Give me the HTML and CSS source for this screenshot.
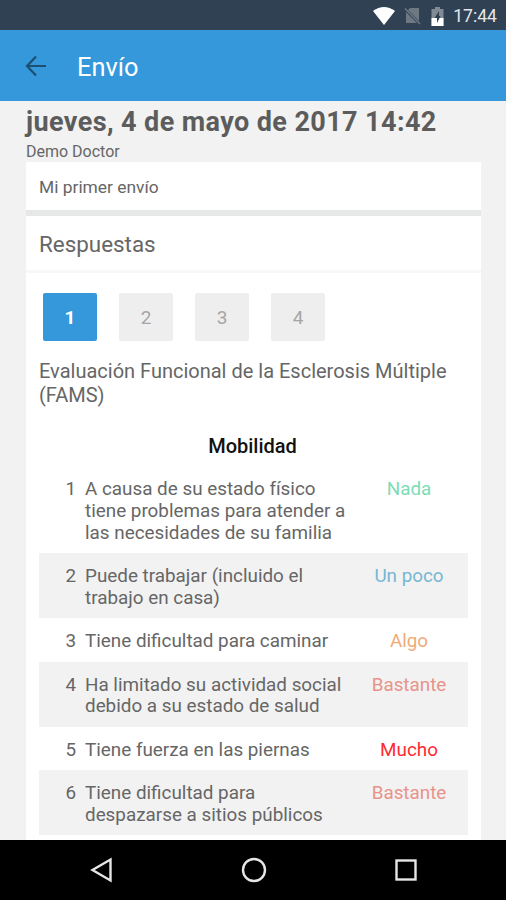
FILE: index.html
```html
<!DOCTYPE html>
<html lang="es">
<head>
    <meta charset="UTF-8">
    <meta name="viewport" content="width=device-width, initial-scale=1.0">
    <title>Envío</title>
    <link rel="stylesheet" href="styles.css">
</head>
<body>
    <!-- Status bar -->
    <div class="status-bar">
        <svg class="wifi" width="24" height="20" viewBox="0 0 24 20">
            <path d="M1 5Q12 -3 23 5L12 19Z" fill="#fff"/>
        </svg>
        <svg class="no-sim" width="18" height="18" viewBox="0 0 18 18">
            <path d="M6 1H15V14L4 3ZM2 5L13 16H2Z" fill="#6d7883"/>
            <path d="M1 1.5L16 17" stroke="#6d7883" stroke-width="1.5"/>
        </svg>
        <svg class="battery" width="13" height="19" viewBox="0 0 13 19">
            <path d="M4 0H9V2H12.5V19H.5V2H4Z" fill="#828b94"/>
            <path d="M.5 11H12.5V19H.5Z" fill="#fff"/>
            <path d="M8 4L3.5 11H6V16L9.5 9H8Z" fill="#304153"/>
        </svg>
        <span class="clock">17:44</span>
    </div>

    <header class="app-bar">
        <svg class="back" width="22" height="22" viewBox="0 0 22 22">
            <path d="M11 1.5L2 11L11 20.5M2 11H21" fill="none" stroke="#1c4f70" stroke-width="2.2"/>
        </svg>
        <h1>Envío</h1>
    </header>

    <main class="content">
        <h2 class="date">jueves, 4 de mayo de 2017 14:42</h2>
        <div class="doctor">Demo Doctor</div>
        <div class="note">Mi primer envío</div>

        <section class="card">
            <h3 class="card-title">Respuestas</h3>
            <div class="card-body">
                <div class="tabs">
                    <button class="active">1</button>
                    <button>2</button>
                    <button>3</button>
                    <button>4</button>
                </div>
                <p class="form-name">Evaluación Funcional de la Esclerosis Múltiple (FAMS)</p>
                <h4 class="group">Mobilidad</h4>
                <div class="rows">
                    <div class="row">
                        <span class="num">1</span>
                        <span class="question">A causa de su estado físico tiene problemas para atender a las necesidades de su familia</span>
                        <span class="answer nada">Nada</span>
                    </div>
                    <div class="row">
                        <span class="num">2</span>
                        <span class="question">Puede trabajar (incluido el trabajo en casa)</span>
                        <span class="answer poco">Un poco</span>
                    </div>
                    <div class="row">
                        <span class="num">3</span>
                        <span class="question">Tiene dificultad para caminar</span>
                        <span class="answer algo">Algo</span>
                    </div>
                    <div class="row">
                        <span class="num">4</span>
                        <span class="question">Ha limitado su actividad social debido a su estado de salud</span>
                        <span class="answer bastante">Bastante</span>
                    </div>
                    <div class="row">
                        <span class="num">5</span>
                        <span class="question">Tiene fuerza en las piernas</span>
                        <span class="answer mucho">Mucho</span>
                    </div>
                    <div class="row">
                        <span class="num">6</span>
                        <span class="question">Tiene dificultad para despazarse a sitios públicos</span>
                        <span class="answer bastante">Bastante</span>
                    </div>
                </div>
            </div>
        </section>
    </main>

    <!-- Android navigation -->
    <nav class="nav-bar">
        <svg width="28" height="28" viewBox="0 0 28 28">
            <path d="M22.5 3.5V24.5L4.5 14Z"/>
        </svg>
        <svg width="28" height="28" viewBox="0 0 28 28">
            <circle cx="14" cy="14" r="11"/>
        </svg>
        <svg width="28" height="28" viewBox="0 0 28 28">
            <rect x="4.5" y="4.5" width="19" height="19"/>
        </svg>
    </nav>
</body>
</html>
```

FILE: styles.css
```css
* {
    box-sizing: border-box;
}
body {
    margin: 0;
    height: 900px;
    display: flex;
    flex-direction: column;
    overflow: hidden;
    background-color: #f2f2f2;
    color: #666;
    font-family: Roboto, sans-serif;
}
h1, h2, h3, h4, p {
    margin: 0;
    font-weight: 400;
}
.status-bar {
    height: 30px;
    flex: none;
    display: flex;
    align-items: center;
    justify-content: flex-end;
    padding: 2px 9px 0 0;
    background-color: #304153;
}
.no-sim {
    margin-left: 8px;
}
.battery {
    margin: 0 9px 0 9px;
}
.clock {
    color: #e4e7ea;
    font-size: 17.6px;
    line-height: 28px;
}
.app-bar {
    height: 71px;
    flex: none;
    display: flex;
    align-items: center;
    gap: 30px;
    padding-left: 25px;
    background-color: #3498db;
}
.app-bar h1 {
    color: #fff;
    font-size: 25.4px;
    line-height: 30px;
    padding-top: 2px;
}
.content {
    flex: 1;
    min-height: 0;
    overflow: hidden;
    padding: 5px 25px 0 26px;
}
.date {
    font-size: 27px;
    font-weight: 700;
    letter-spacing: .4px;
    line-height: 32px;
    color: #5c5c5c;
    white-space: nowrap;
}
.doctor {
    height: 24px;
    font-size: 16px;
    line-height: 27px;
}
.note {
    height: 48px;
    padding-left: 13px;
    background-color: #fff;
    font-size: 17.4px;
    line-height: 50px;
}
.card {
    margin-top: 6px;
    background-color: #fff;
    box-shadow: 0 -6px 0 #e6e8e8;
}
.card-title {
    height: 57px;
    padding-left: 13px;
    border-bottom: 3px solid #f7f7f7;
    font-size: 22.4px;
    line-height: 57px;
}
.card-body {
    padding: 20px 13px;
}
.tabs {
    display: flex;
    gap: 22px;
    padding-left: 4px;
}
.tabs button {
    width: 54px;
    height: 48px;
    padding: 1px 0 0;
    border: none;
    border-radius: 2px;
    background-color: #eee;
    color: #a6a6a6;
    font-family: inherit;
    font-size: 19px;
}
.tabs .active {
    background-color: #3498db;
    color: #fff;
    font-weight: 700;
}
.form-name {
    margin-top: 18px;
    font-size: 20px;
    line-height: 24px;
}
.group {
    margin: 27px 0 8px;
    padding-right: 2px;
    color: #111;
    font-size: 20px;
    font-weight: 500;
    line-height: 24px;
    text-align: center;
}
.row {
    display: flex;
    padding: 13px 0 8.6px;
    font-size: 18.85px;
    line-height: 21.8px;
}
.row:nth-child(even) {
    background-color: #f2f2f2;
}
.row span {
    flex: none;
}
.num {
    width: 46px;
    padding-right: 9px;
    text-align: right;
}
.question {
    width: 264px;
}
.answer {
    width: 120px;
    text-align: center;
}
.nada {
    color: #7ddcb6;
}
.poco {
    color: #77b7d2;
}
.algo {
    color: #f0ab78;
}
.bastante {
    color: #e8938a;
}
.mucho {
    color: #ff2a2f;
}
.nav-bar {
    height: 60px;
    flex: none;
    display: flex;
    justify-content: center;
    align-items: center;
    gap: 124px;
    padding-left: 1px;
    background-color: #000;
}
.nav-bar svg {
    fill: none;
    stroke: #e6e6e6;
    stroke-width: 2.4;
}
```
